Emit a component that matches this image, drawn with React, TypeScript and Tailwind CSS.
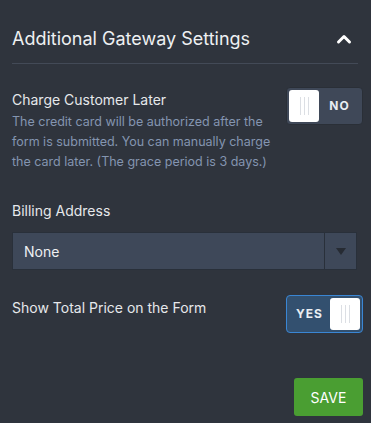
import { useState } from "react";

function Grip() {
  return (
    <div className="flex gap-[3px]">
      <span className="w-px h-[18px] bg-[#dcdfe4]" />
      <span className="w-px h-[18px] bg-[#dcdfe4]" />
      <span className="w-px h-[18px] bg-[#dcdfe4]" />
    </div>
  );
}

function Toggle({ on, onClick }: { on: boolean; onClick: () => void }) {
  return (
    <button
      onClick={onClick}
      className={`flex items-center w-[77px] h-[38px] p-[2px] rounded-[4px] border shrink-0 ${
        on ? "bg-[#33506f] border-[#3a86d4] justify-end" : "bg-[#3f4858] border-[#2a2f37] justify-start"
      }`}
    >
      {on ? (
        <>
          <span className="flex-1 text-center text-[12px] font-bold tracking-[1px] text-[#e9edf2]">YES</span>
          <span className="w-[30px] h-[32px] bg-white rounded-[3px] flex items-center justify-center">
            <Grip />
          </span>
        </>
      ) : (
        <>
          <span className="w-[30px] h-[32px] bg-white rounded-[3px] flex items-center justify-center">
            <Grip />
          </span>
          <span className="flex-1 text-center text-[12px] font-bold tracking-[1px] text-[#e9edf2]">NO</span>
        </>
      )}
    </button>
  );
}

export default function App() {
  const [chargeLater, setChargeLater] = useState(false);
  const [showTotal, setShowTotal] = useState(true);

  return (
    <div
      className="w-[371px] h-[423px] bg-[#2f343d] text-[#e6e8eb] pl-3 pr-2 flex flex-col"
      style={{ fontFamily: "Inter, 'Liberation Sans', sans-serif" }}
    >
      {/* Header */}
      <div className="flex items-center justify-between h-[64px] pt-[14px] mr-[5px] border-b border-[#434a57] shrink-0">
        <h2 className="text-[18px] text-[#eef0f2]">Additional Gateway Settings</h2>
        <svg width="16" height="12" viewBox="0 0 16 12" className="mr-[6px]">
          <path d="M2.5 9 L8 3.5 L13.5 9" fill="none" stroke="#fff" strokeWidth="3" strokeLinecap="round" strokeLinejoin="round" />
        </svg>
      </div>

      {/* Charge Customer Later */}
      <div className="flex justify-between mt-[23px]">
        <div className="pt-[3px]">
          <div className="text-[14px] leading-[20px]">Charge Customer Later</div>
          <p className="mt-[2px] text-[12.5px] leading-[20px] text-[#8495b0] w-[272px]">
            The credit card will be authorized after the form is submitted. You can manually charge the card later. (The grace period is 3 days.)
          </p>
        </div>
        <Toggle on={chargeLater} onClick={() => setChargeLater(!chargeLater)} />
      </div>

      {/* Billing Address */}
      <div className="mt-[29px] text-[14px] leading-[20px]">Billing Address</div>
      <div className="mt-[11px] flex h-[38px] bg-[#3e4859] border border-[#29303a] mr-[6px]">
        <div className="flex-1 flex items-center pl-[11px] text-[14px] text-[#eef0f2]">None</div>
        <div className="w-[32px] border-l border-[#29303a] flex items-center justify-center">
          <svg width="10" height="7" viewBox="0 0 10 7">
            <path d="M0 0 H10 L5 7 Z" fill="#262b33" />
          </svg>
        </div>
      </div>

      {/* Show Total Price */}
      <div className="flex justify-between mt-[25px]">
        <div className="text-[14px] leading-[20px] pt-[3px]">Show Total Price on the Form</div>
        <Toggle on={showTotal} onClick={() => setShowTotal(!showTotal)} />
      </div>

      <div className="flex justify-end mt-[45px]">
        <button className="w-[69px] h-[38px] bg-[#4a9e32] rounded-[3px] text-[14px] text-white">SAVE</button>
      </div>
    </div>
  );
}
